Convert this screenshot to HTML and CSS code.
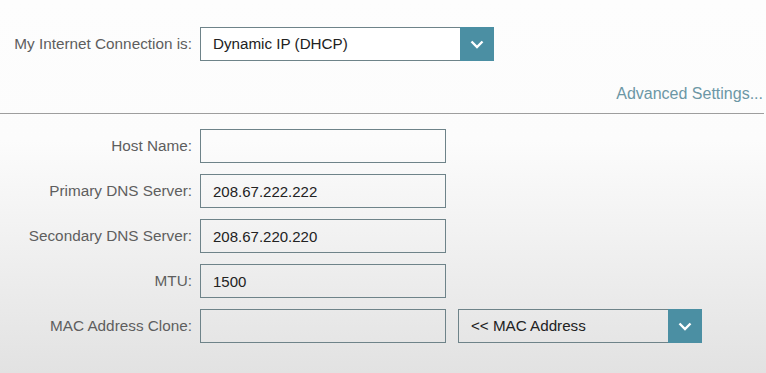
FILE: index.html
```html
<!DOCTYPE html>
<html lang="en">
<head>
  <meta charset="UTF-8">
  <meta name="viewport" content="width=device-width, initial-scale=1">
  <title>Internet Settings</title>
  <link rel="stylesheet" href="styles.css">
</head>
<body>
  <div class="conn-row">
    <label class="label" for="conn-type">My Internet Connection is:</label>
    <div class="select wide">
      <span class="select-text" id="conn-type">Dynamic IP (DHCP)</span>
      <span class="select-btn">
        <svg width="14" height="9" viewBox="0 0 14 9"><path d="M1.5 1.5 L7 7 L12.5 1.5" fill="none" stroke="#fff" stroke-width="2.4"/></svg>
      </span>
    </div>
  </div>
  <div class="advanced"><a href="#">Advanced Settings...</a></div>
  <div class="divider"></div>
  <div class="fields">
    <label class="label">Host Name:</label>
    <input class="field" type="text" value="">
    <label class="label">Primary DNS Server:</label>
    <input class="field" type="text" value="208.67.222.222">
    <label class="label">Secondary DNS Server:</label>
    <input class="field" type="text" value="208.67.220.220">
    <label class="label">MTU:</label>
    <input class="field" type="text" value="1500">
    <label class="label">MAC Address Clone:</label>
    <div class="mac-row">
      <input class="field" type="text" value="">
      <div class="select mac">
        <span class="select-text">&lt;&lt; MAC Address</span>
        <span class="select-btn">
          <svg width="14" height="9" viewBox="0 0 14 9"><path d="M1.5 1.5 L7 7 L12.5 1.5" fill="none" stroke="#fff" stroke-width="2.4"/></svg>
        </span>
      </div>
    </div>
  </div>
</body>
</html>
```

FILE: styles.css
```css
* { margin: 0; padding: 0; box-sizing: border-box; }
body {
  font-family: 'Liberation Sans', Arial, sans-serif;
  background: linear-gradient(to bottom, #fdfdfd 0, #fcfcfc 140px, #e2e2e2 373px);
  min-height: 373px;
  color: #222;
  font-size: 14px;
}
.label {
  color: #5e5e5e;
  font-size: 15.3px;
  text-align: right;
  padding-right: 8px;
}
.conn-row {
  display: flex;
  align-items: center;
  padding-top: 27px;
}
.conn-row .label { width: 200px; }
.select {
  display: flex;
  height: 34px;
  border: 1px solid #6e8389;
  background: transparent;
}
.select.wide { width: 294px; background: #fff; }
.select.mac { width: 244px; }
.select-text {
  flex: 1;
  padding-left: 12px;
  line-height: 32px;
  font-size: 15.2px;
  color: #222;
}
.select-btn {
  width: 34px;
  margin: -1px -1px -1px 0;
  background: #4b8fa3;
  display: flex;
  align-items: center;
  justify-content: center;
}
.advanced {
  text-align: right;
  padding-right: 3px;
  margin-top: 23px;
  line-height: 20px;
}
.advanced a {
  color: #6c97a5;
  font-size: 16px;
  text-decoration: none;
}
.divider {
  margin-top: 9px;
  height: 1px;
  width: 764px;
  background: #9e9e9e;
}
.fields {
  display: grid;
  grid-template-columns: 200px auto;
  grid-auto-rows: 34px;
  row-gap: 11px;
  align-items: center;
  padding-top: 15px;
}
.field {
  width: 246px;
  height: 34px;
  border: 1px solid #6e8389;
  background: transparent;
  font-family: inherit;
  font-size: 15px;
  color: #222;
  padding-left: 12px;
  outline: none;
}
.mac-row {
  display: flex;
  gap: 12px;
}
```
